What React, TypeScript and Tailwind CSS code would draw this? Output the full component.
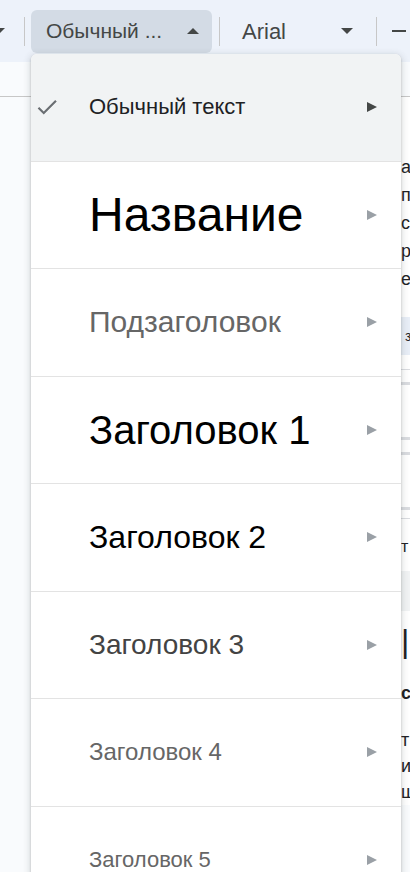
import React from "react";

const styles = [
  { label: "Обычный текст", cls: "text-[22px] text-[#202124]", checked: true },
  { label: "Название", cls: "text-[48px] text-black" },
  { label: "Подзаголовок", cls: "text-[30px] text-[#666666]" },
  { label: "Заголовок 1", cls: "text-[40px] text-black" },
  { label: "Заголовок 2", cls: "text-[32px] text-black" },
  { label: "Заголовок 3", cls: "text-[28px] text-[#434343]" },
  { label: "Заголовок 4", cls: "text-[24px] text-[#666666]" },
  { label: "Заголовок 5", cls: "text-[22px] text-[#666666]" },
];

function Arrow({ dark }: { dark?: boolean }) {
  return (
    <svg width="10" height="10" viewBox="0 0 10 10" className="shrink-0">
      <polygon points="0,0 10,5 0,10" fill={dark ? "#444746" : "#9aa0a6"} />
    </svg>
  );
}

function Caret({ up }: { up?: boolean }) {
  return (
    <svg width="12" height="6" viewBox="0 0 12 6">
      <polygon points={up ? "0,6 6,0 12,6" : "0,0 6,6 12,0"} fill="#444746" />
    </svg>
  );
}

export default function App() {
  return (
    <div className="relative h-[872px] w-[410px] overflow-hidden bg-[#f9fbfd] font-[family-name:'Liberation_Sans',Arial,sans-serif]">
      {/* toolbar */}
      <div className="flex h-[62px] items-center bg-[#edf2fa]">
        <div className="flex w-[24px] items-center">
          <div className="-ml-[7px]">
            <Caret />
          </div>
        </div>
        <div className="h-[29px] w-px bg-[#c7c7c7]" />
        <div className="ml-[6px] flex h-[43px] w-[181px] items-center justify-between rounded-md bg-[#d3dbe5] pl-[15px] pr-[13px] text-[21px] text-[#444746]">
          <span>Обычный ...</span>
          <Caret up />
        </div>
        <div className="ml-[7px] h-[29px] w-px bg-[#c7c7c7]" />
        <div className="flex w-[156px] items-center justify-between pl-[22px] pr-[23px] text-[22px] text-[#444746]">
          <span>Arial</span>
          <Caret />
        </div>
        <div className="h-[29px] w-px bg-[#c7c7c7]" />
        <div className="ml-[15px] h-[2px] w-[14px] bg-[#444746]" />
      </div>

      {/* ruler / doc area */}
      <div className="h-[35px] border-b border-[#c7c7c7] bg-[#f9fbfd]" />
      <div className="ml-[401px] overflow-hidden bg-white text-[18px] leading-[28px] text-[#202124]">
        <div className="h-[56px]" />
        <div className="flex flex-col">
          <span>а</span>
          <span>п</span>
          <span>с</span>
          <span>р</span>
          <span>е</span>
        </div>
        <div className="mt-[24px] h-[38px] bg-[#e8eef7] pl-[4px] text-[14px] leading-[38px]">з</div>
        <div className="mt-[14px] h-px bg-[#dadce0]" />
        <div className="mt-[12px] h-[3px] bg-[#dadce0]" />
        <div className="h-[52px]" />
        <div className="h-[3px] bg-[#dadce0]" />
        <div className="mt-[12px] h-[3px] bg-[#dadce0]" />
        <div className="h-[52px]" />
        <div className="h-[3px] bg-[#dadce0]" />
        <div className="mt-[8px] h-px bg-[#dadce0]" />
        <div className="mt-[14px] text-[16px]">т</div>
        <div className="mt-[10px] h-[40px] bg-[#f1f3f4]" />
        <div className="mt-[10px] text-[32px] leading-[40px]">|</div>
        <div className="mt-[18px] text-[18px] font-bold">с</div>
        <div className="mt-[20px] flex flex-col leading-[26px]">
          <span>т</span>
          <span>и</span>
          <span>ш</span>
        </div>
      </div>

      {/* style menu */}
      <div className="absolute left-[31px] top-[54px] w-[370px] overflow-hidden rounded-md bg-white shadow-[0_2px_6px_2px_rgba(60,64,67,0.15),0_1px_2px_rgba(60,64,67,0.3)]">
        {styles.map((s, i) => (
          <div
            key={s.label}
            className={`flex h-[107.5px] items-center border-b border-[#e3e3e3] pr-[24px] ${
              i === 0 ? "bg-[#f1f3f4]" : "bg-white"
            }`}
          >
            <div className="flex w-[58px] justify-start pl-[3px]">
              {s.checked && (
                <svg width="26" height="26" viewBox="0 0 24 24">
                  <path d="M9 16.17L4.83 12l-1.42 1.41L9 19 21 7l-1.41-1.41z" fill="#6b6f73" />
                </svg>
              )}
            </div>
            <span className={`flex-1 whitespace-nowrap leading-none ${s.cls}`}>{s.label}</span>
            <Arrow dark={i === 0} />
          </div>
        ))}
      </div>
    </div>
  );
}
